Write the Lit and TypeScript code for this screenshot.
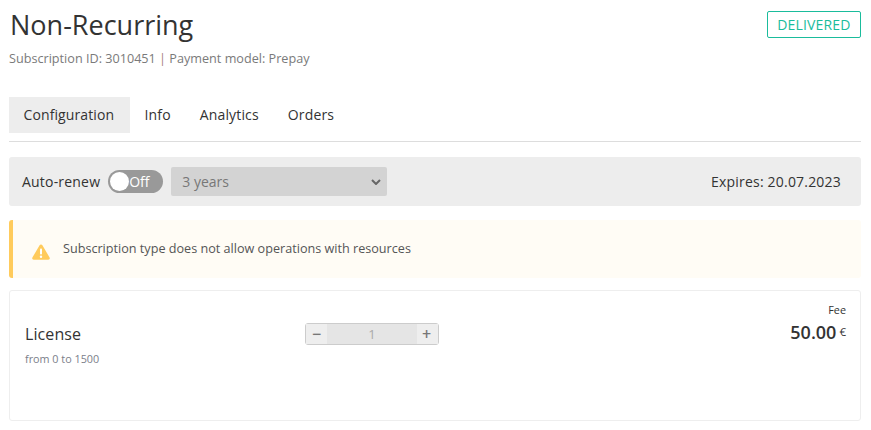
import { LitElement, html, css } from "lit";
import { customElement } from "lit/decorators.js";

@customElement("app-root")
export class AppRoot extends LitElement {
  static styles = css`
    :host { display: block; background: #fff; font-family: "Open Sans", sans-serif; color: #333; height: 430px; overflow: hidden; }
    .page { display: flex; flex-direction: column; padding: 0 10px 0 9px; }
    .head { display: flex; justify-content: space-between; align-items: flex-start; height: 97px; }
    h1 { margin: 0; font-size: 27px; font-weight: 400; line-height: 38px; padding: 6px 0 0 1px; color: #333; }
    .sub { font-size: 12.65px; line-height: 18px; margin-top: 5px; color: #7a7a7a; }
    .sep { color: #a87f7f; }
    .badge { margin-top: 11px; height: 27px; box-sizing: border-box; border: 1px solid #1abc9c; border-radius: 2px; color: #1abc9c; font-size: 14px; line-height: 25px; padding: 0 9.5px; letter-spacing: 0.15px; }
    .tabs { display: flex; border-bottom: 1px solid #ddd; height: 45px; box-sizing: border-box; }
    .tab { height: 36px; line-height: 36px; font-size: 14px; padding: 0 14.5px; color: #333; letter-spacing: 0.15px; }
    .tab.on { background: #ededed; padding: 0 14.5px; width: 121px; box-sizing: border-box; letter-spacing: 0.1px; }
    .bar { margin-top: 15px; height: 49px; background: #ededed; border-radius: 3px; display: flex; align-items: center; padding: 0 20px 0 13px; font-size: 14px; letter-spacing: 0.2px; }
    .toggle { margin-left: 8px; width: 55px; height: 23px; border-radius: 12px; background: #999; position: relative; color: #fff; font-size: 14px; line-height: 23px; box-sizing: border-box; padding-left: 21px; letter-spacing: 0; }
    .knob { position: absolute; left: 2px; top: 2px; width: 19px; height: 19px; border-radius: 50%; background: #fff; }
    .select { margin-left: 8px; width: 216px; height: 29px; background: #d3d3d3; border-radius: 2px; color: #777; font-size: 14px; line-height: 29px; padding: 0 5px 0 11px; box-sizing: border-box; display: flex; justify-content: space-between; align-items: center; letter-spacing: 0; }
    .select svg { margin-right: 1px; }
    .spacer { flex: 1; }
    .alert { margin-top: 14px; height: 58px; background: #fffcf5; border-left: 4px solid #ffcb5c; border-radius: 3px; display: flex; align-items: center; padding-left: 19px; font-size: 12.63px; color: #555; gap: 13px; }
    .alert svg { display: block; margin-top: 6px; }
    .alert span { margin-bottom: 2px; }
    .card { margin-top: 12px; height: 131px; box-sizing: border-box; border: 1px solid #eee; border-radius: 3px; display: grid; grid-template-columns: 280px 134px 1fr; padding: 0 14px 0 15px; }
    .name { font-size: 16px; line-height: 22px; margin-top: 32px; letter-spacing: 0.1px; }
    .range { font-size: 10.8px; line-height: 14px; margin-top: 7px; color: #7c808a; }
    .stepper { margin-top: 32px; height: 22px; width: 134px; box-sizing: border-box; border: 1px solid #ccc; border-radius: 3px; background: #e5e5e5; display: grid; grid-template-columns: 21px 1fr 21px; align-items: center; text-align: center; color: #aaa; font-size: 13px; line-height: 20px; }
    .stepper b { font-weight: 600; font-size: 16px; height: 20px; background: #eee; color: #777; display: flex; align-items: center; justify-content: center; }
    .stepper b.plus { padding-right: 2px; box-sizing: border-box; }
    .fee { text-align: right; }
    .fee .lbl { font-size: 10.8px; line-height: 14px; margin-top: 12px; }
    .fee .val { font-size: 18px; font-weight: 600; line-height: 24px; margin-top: 3px; }
    .fee .cur { font-size: 11.5px; font-weight: 400; margin-left: 3px; vertical-align: 3px; }
  `;

  render() {
    return html`<div class="page">
      <div class="head">
        <div>
          <h1>Non-Recurring</h1>
          <div class="sub">Subscription ID: 3010451 <span class="sep">|</span> Payment model: Prepay</div>
        </div>
        <div class="badge">DELIVERED</div>
      </div>
      <div class="tabs">
        <div class="tab on">Configuration</div>
        <div class="tab">Info</div>
        <div class="tab">Analytics</div>
        <div class="tab">Orders</div>
      </div>
      <div class="bar">
        <span>Auto-renew</span>
        <div class="toggle"><div class="knob"></div>Off</div>
        <div class="select"><span>3 years</span>
          <svg width="10" height="6" viewBox="0 0 10 6"><path d="M1 1l4 4 4-4" fill="none" stroke="#666" stroke-width="2"/></svg>
        </div>
        <div class="spacer"></div>
        <span>Expires: 20.07.2023</span>
      </div>
      <div class="alert">
        <svg width="18" height="16" viewBox="0 0 18 16"><path d="M9 .5c.6 0 1.100.3 1.400.8l7.200 12.200c.6 1-.1 2.200-1.300 2.200H1.700c-1.200 0-1.900-1.200-1.300-2.200L7.600 1.300C7.900.8 8.400.5 9 .5z" fill="#ffcb5c"/><rect x="8" y="4.500" width="2" height="6" rx=".8" fill="#fff"/><circle cx="9" cy="12.700" r="1.200" fill="#fff"/></svg>
        <span>Subscription type does not allow operations with resources</span>
      </div>
      <div class="card">
        <div>
          <div class="name">License</div>
          <div class="range">from 0 to 1500</div>
        </div>
        <div class="stepper"><b>−</b><span>1</span><b class="plus">+</b></div>
        <div class="fee">
          <div class="lbl">Fee</div>
          <div class="val">50.00<span class="cur">€</span></div>
        </div>
      </div>
    </div>`;
  }
}
